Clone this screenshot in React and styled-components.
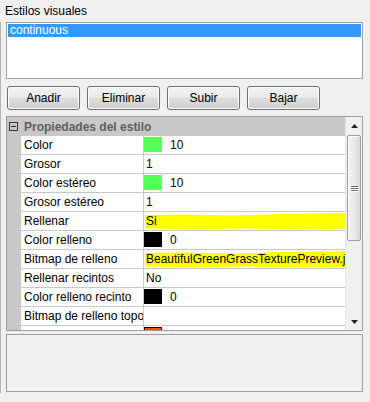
import React from "react";
import styled, { createGlobalStyle } from "styled-components";

const GlobalStyle = createGlobalStyle`
  html, body {
    margin: 0;
    padding: 0;
    background: #f0f0f0;
  }
  body {
    font-family: "Liberation Sans", Arial, sans-serif;
    font-size: 12px;
    color: #000;
  }
`;

const properties = [
  { name: "Color", swatch: "#55ff55", value: "10" },
  { name: "Grosor", value: "1" },
  { name: "Color estéreo", swatch: "#55ff55", value: "10" },
  { name: "Grosor estéreo", value: "1" },
  { name: "Rellenar", value: "Si", marked: true },
  { name: "Color relleno", swatch: "#000000", value: "0" },
  { name: "Bitmap de relleno", value: "BeautifulGreenGrassTexturePreview.jpg", marked: true },
  { name: "Rellenar recintos", value: "No" },
  { name: "Color relleno recinto", swatch: "#000000", value: "0" },
  { name: "Bitmap de relleno topografico", value: "" },
  { name: "", swatch: "#ff4a10", value: "" },
];

export default function App() {
  return (
    <>
      <GlobalStyle />
      <Window>
        <Title>Estilos visuales</Title>
        <Body>
          <ListBox>
            <ListItem selected>continuous</ListItem>
          </ListBox>
          <Buttons>
            <Button>Anadir</Button>
            <Button>Eliminar</Button>
            <Button>Subir</Button>
            <Button>Bajar</Button>
          </Buttons>
          <Grid>
            <GridContent>
              <Category>
                <Toggle />
                <span>Propiedades del estilo</span>
              </Category>
              {properties.map((p, i) => (
                <Row key={i}>
                  <Gutter />
                  <Name>{p.name}</Name>
                  <Value>
                    {p.marked && <Marker />}
                    {p.swatch && <Swatch color={p.swatch} />}
                    <ValueText indent={!!p.swatch}>{p.value}</ValueText>
                  </Value>
                </Row>
              ))}
            </GridContent>
            <ScrollBar>
              <Arrow>
                <svg width="7" height="4" viewBox="0 0 7 4">
                  <path d="M3.5 0 L7 4 L0 4 Z" fill="#222" />
                </svg>
              </Arrow>
              <Track>
                <Thumb>
                  <Grip>
                    <i />
                    <i />
                    <i />
                  </Grip>
                </Thumb>
              </Track>
              <Arrow>
                <svg width="7" height="4" viewBox="0 0 7 4">
                  <path d="M0 0 L7 0 L3.5 4 Z" fill="#222" />
                </svg>
              </Arrow>
            </ScrollBar>
          </Grid>
          <Description />
        </Body>
      </Window>
    </>
  );
}

function Marker() {
  return (
    <MarkerSvg viewBox="0 0 200 18" preserveAspectRatio="none">
      <path
        d="M1 3 L40 2.5 L90 3.5 L140 2 L170 1.5 L200 1 L200 17 L150 17.5 L100 16.5 L50 17.5 L1 16.5 Z"
        fill="#ffff00"
      />
    </MarkerSvg>
  );
}

const Window = styled.div`
  width: 370px;
  height: 402px;
  background: #f0f0f0;
  overflow: hidden;
`;

const Title = styled.div`
  height: 22px;
  padding: 4px 0 0 5px;
  box-sizing: border-box;
  line-height: 14px;
`;

const Body = styled.div`
  height: 371px;
  border-left: 1px solid #b4b4b4;
  padding-left: 5px;
  display: flex;
  flex-direction: column;
`;

const ListBox = styled.div`
  width: 357px;
  height: 57px;
  box-sizing: border-box;
  border: 1px solid #a0a0a0;
  background: #fff;
  padding: 1px;
`;

const ListItem = styled.div`
  height: 13px;
  line-height: 13px;
  padding-left: 2px;
  background: ${(p) => (p.selected ? "#3399ff" : "transparent")};
  color: ${(p) => (p.selected ? "#fff" : "#000")};
`;

const Buttons = styled.div`
  display: flex;
  gap: 7px;
  margin: 7px 0 0 1px;
`;

const Button = styled.button`
  width: 73px;
  height: 24px;
  border: 1px solid #707070;
  border-radius: 3px;
  background: linear-gradient(#f2f2f2 0%, #ebebeb 45%, #dddddd 50%, #cfcfcf 100%);
  box-shadow: inset 0 0 0 1px #fcfcfc;
  font-family: "Liberation Sans", Arial, sans-serif;
  font-size: 12px;
  color: #000;
  padding: 0;
`;

const Grid = styled.div`
  margin-top: 6px;
  width: 357px;
  height: 215px;
  box-sizing: border-box;
  border: 1px solid #a0a0a0;
  display: flex;
  background: #fff;
  overflow: hidden;
`;

const GridContent = styled.div`
  flex: 1;
  display: flex;
  flex-direction: column;
  background: #c8c8c8;
  overflow: hidden;
`;

const Category = styled.div`
  height: 19px;
  flex-shrink: 0;
  display: flex;
  align-items: center;
  gap: 6px;
  padding-left: 2px;
  font-weight: bold;
  color: #606060;
`;

const Toggle = styled.span`
  width: 9px;
  height: 9px;
  box-sizing: border-box;
  border: 1px solid #333;
  position: relative;

  &::after {
    content: "";
    position: absolute;
    left: 1px;
    right: 1px;
    top: 3px;
    height: 1px;
    background: #333;
  }
`;

const Row = styled.div`
  display: flex;
  height: 19px;
  flex-shrink: 0;
`;

const Gutter = styled.div`
  width: 14px;
  flex-shrink: 0;
`;

const Name = styled.div`
  width: 122px;
  flex-shrink: 0;
  background: #fff;
  border-bottom: 1px solid #c8c8c8;
  border-right: 1px solid #c8c8c8;
  padding-left: 3px;
  box-sizing: border-box;
  width: 123px;
  line-height: 18px;
  white-space: nowrap;
  overflow: hidden;
`;

const Value = styled.div`
  flex: 1;
  position: relative;
  background: #fff;
  border-bottom: 1px solid #c8c8c8;
  display: flex;
  align-items: center;
  white-space: nowrap;
  overflow: hidden;
`;

const MarkerSvg = styled.svg`
  position: absolute;
  left: 0;
  top: 0;
  width: 100%;
  height: 18px;
`;

const Swatch = styled.span`
  width: 18px;
  height: 15px;
  box-sizing: border-box;
  flex-shrink: 0;
  background: ${(p) => p.color};
  border: 1px solid ${(p) => (p.color === "#ff4a10" ? "#000" : p.color)};
  align-self: flex-start;
  margin-top: 1px;
`;

const ValueText = styled.span`
  position: relative;
  padding-left: ${(p) => (p.indent ? "8px" : "2px")};
  line-height: 18px;
`;

const ScrollBar = styled.div`
  width: 17px;
  flex-shrink: 0;
  display: flex;
  flex-direction: column;
  background: #f0f0f0;
  border-left: 1px solid #e6e6e6;
  box-sizing: border-box;
`;

const Arrow = styled.div`
  height: 17px;
  flex-shrink: 0;
  display: flex;
  align-items: center;
  justify-content: center;
`;

const Track = styled.div`
  flex: 1;
  padding: 1px 0;
`;

const Thumb = styled.div`
  height: 104px;
  margin: 0 1px;
  border: 1px solid #a0a0a0;
  border-radius: 2px;
  background: linear-gradient(90deg, #f4f4f4 0%, #e9e9e9 50%, #d8d8d8 100%);
  box-shadow: inset 1px 1px 0 #ffffff;
  display: flex;
  align-items: center;
  justify-content: center;
`;

const Grip = styled.div`
  display: flex;
  flex-direction: column;
  gap: 1px;

  i {
    display: block;
    width: 7px;
    height: 1px;
    background: #707070;
    box-shadow: 0 1px 0 #ffffff;
  }
`;

const Description = styled.div`
  margin-top: 3px;
  width: 357px;
  height: 58px;
  box-sizing: border-box;
  border: 1px solid #a0a0a0;
  background: #f0f0f0;
`;
